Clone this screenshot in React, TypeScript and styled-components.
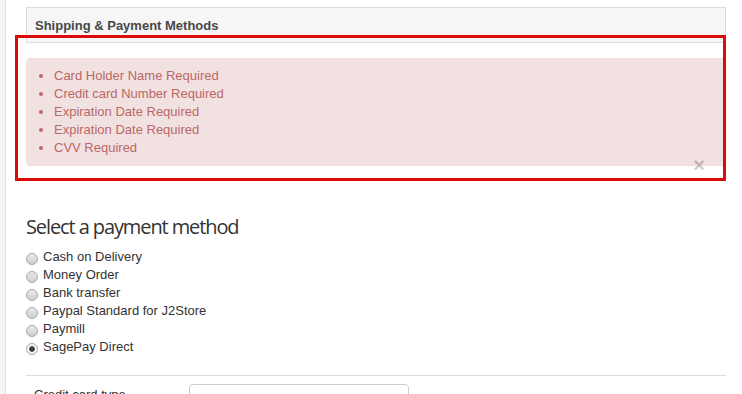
import React, { useState } from "react";
import styled, { createGlobalStyle } from "styled-components";

const GlobalStyle = createGlobalStyle`
  body {
    margin: 0;
    background: #fff;
    color: #333;
    font-family: "Liberation Sans", Arial, sans-serif;
    font-size: 13px;
  }
`;

const Page = styled.div`
  display: flex;
  min-height: 394px;
  overflow: hidden;
`;

const SideRail = styled.div`
  width: 5px;
  flex-shrink: 0;
  background: #f5f5f5;
  border-right: 1px solid #e4e4e4;
`;

const Main = styled.main`
  flex: 1;
  padding: 7px 0 0 20px;
`;

const Content = styled.div`
  position: relative;
  width: 700px;
`;

const PanelHeading = styled.div`
  height: 34px;
  display: flex;
  align-items: center;
  padding: 0 8px;
  background: #f6f6f6;
  border: 1px solid #dddddd;
  color: #484848;
  font-weight: bold;
  font-size: 13px;
`;

const PanelBody = styled.div`
  padding-top: 15px;
`;

const Alert = styled.div`
  position: relative;
  background: #f2e1e1;
  border: 1px solid #efdcdc;
  border-radius: 4px;
  color: #bb6766;
  padding: 8px 0 8px;
`;

const ErrorList = styled.ul`
  margin: 0;
  padding-left: 27px;
  line-height: 18px;
`;

const Close = styled.button`
  position: absolute;
  right: 20px;
  bottom: -10px;
  padding: 0;
  border: none;
  background: transparent;
  font-family: "Liberation Sans", Arial, sans-serif;
  font-size: 20px;
  font-weight: bold;
  line-height: 20px;
  color: #000;
  opacity: 0.2;
  cursor: pointer;
`;

const Highlight = styled.div`
  position: absolute;
  left: -11px;
  top: 28px;
  width: 711px;
  height: 146px;
  box-sizing: border-box;
  border: 3px solid #dd0a0a;
  pointer-events: none;
`;

const SectionTitle = styled.h3`
  margin: 49px 0 9px;
  font-family: "Open Sans", "Liberation Sans", sans-serif;
  font-size: 20px;
  font-weight: 500;
  letter-spacing: -1.1px;
  line-height: 24px;
  color: #333;
`;

const MethodList = styled.div`
  display: flex;
  flex-direction: column;
`;

const MethodRow = styled.label`
  display: flex;
  align-items: center;
  gap: 5px;
  height: 18px;
  line-height: 18px;
  color: #333;
  cursor: pointer;
`;

const Radio = styled.input`
  appearance: none;
  width: 12px;
  height: 12px;
  margin: 3px 0 0;
  border-radius: 50%;
  border: 1px solid #a9a9a9;
  background: linear-gradient(#e9e9e9, #cfcfcf);
  flex-shrink: 0;

  &:checked {
    background: radial-gradient(circle, #3d3d3d 0 2.4px, #f4f4f4 3.2px);
  }
`;

const Divider = styled.hr`
  margin: 19px 0 0;
  border: none;
  border-top: 1px solid #dddddd;
`;

const FieldRow = styled.div`
  display: flex;
  align-items: flex-start;
  padding: 8px 0 0 8px;
`;

const FieldLabel = styled.label`
  width: 155px;
  padding-top: 2px;
  line-height: 18px;
  color: #333;
`;

const TextInput = styled.input`
  width: 220px;
  height: 28px;
  box-sizing: border-box;
  border: 1px solid #cccccc;
  border-radius: 4px;
  padding: 4px 6px;
  font-family: inherit;
  font-size: 13px;
`;

const errors = [
  "Card Holder Name Required",
  "Credit card Number Required",
  "Expiration Date Required",
  "Expiration Date Required",
  "CVV Required",
];

const methods = [
  "Cash on Delivery",
  "Money Order",
  "Bank transfer",
  "Paypal Standard for J2Store",
  "Paymill",
  "SagePay Direct",
];

const App: React.FC = () => {
  const [method, setMethod] = useState("SagePay Direct");
  const [showErrors, setShowErrors] = useState(true);

  return (
    <>
      <GlobalStyle />
      <Page>
        <SideRail />
        <Main>
          <Content>
            <PanelHeading>Shipping &amp; Payment Methods</PanelHeading>
            <PanelBody>
              {showErrors && (
                <Alert>
                  <ErrorList>
                    {errors.map((msg, i) => (
                      <li key={i}>{msg}</li>
                    ))}
                  </ErrorList>
                  <Close type="button" onClick={() => setShowErrors(false)}>
                    ×
                  </Close>
                </Alert>
              )}
            </PanelBody>
            <Highlight />

            <SectionTitle>Select a payment method</SectionTitle>
            <MethodList>
              {methods.map((m) => (
                <MethodRow key={m}>
                  <Radio
                    type="radio"
                    name="payment_plugin"
                    checked={method === m}
                    onChange={() => setMethod(m)}
                  />
                  {m}
                </MethodRow>
              ))}
            </MethodList>

            <Divider />
            <FieldRow>
              <FieldLabel>Credit card type</FieldLabel>
              <TextInput type="text" />
            </FieldRow>
          </Content>
        </Main>
      </Page>
    </>
  );
};

export default App;
